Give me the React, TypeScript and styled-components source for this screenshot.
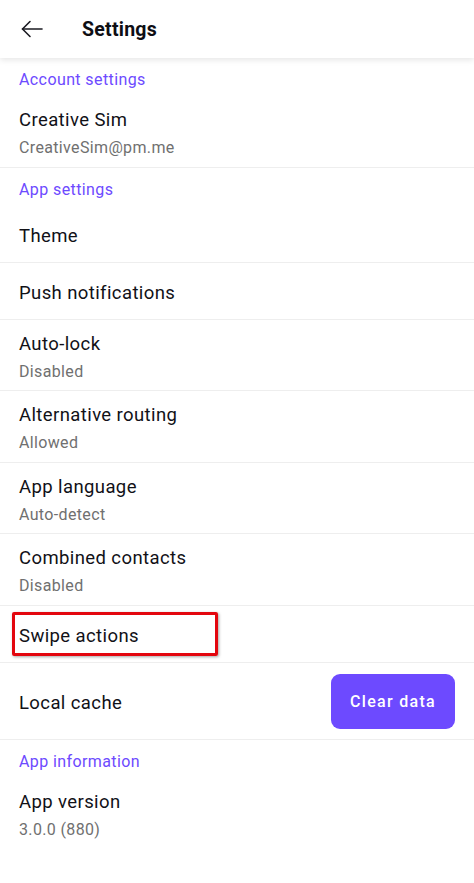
import React from "react";
import styled, { createGlobalStyle } from "styled-components";

const Global = createGlobalStyle`
  html, body { margin: 0; padding: 0; background: #ffffff; }
  body { font-family: Roboto, "Noto Sans", "Liberation Sans", sans-serif; -webkit-font-smoothing: antialiased; }
  * { box-sizing: border-box; }
`;

const Page = styled.div`
  width: 474px;
  min-height: 883px;
  background: #ffffff;
  display: flex;
  flex-direction: column;
`;

const TopBar = styled.header`
  height: 58px;
  display: flex;
  align-items: center;
  padding-left: 19px;
  gap: 39px;
  background: #ffffff;
  box-shadow: 0 2px 6px rgba(0, 0, 0, 0.1);
  position: relative;
  z-index: 1;
`;

const BackButton = styled.button`
  width: 24px;
  height: 24px;
  padding: 0;
  border: none;
  background: none;
  display: flex;
  align-items: center;
  justify-content: center;
  color: #1b1b22;
  overflow: visible;
`;

const Title = styled.h1`
  margin: 0;
  font-size: 19.5px;
  font-weight: 700;
  color: #0e0e14;
  letter-spacing: 0.25px;
`;

const SectionHeader = styled.div`
  padding: 10px 19px 4px;
  font-size: 16px;
  line-height: 24px;
  color: #6d4aff;
  letter-spacing: 0.4px;
`;

const Row = styled.div<{ $twoLine?: boolean; $divider?: boolean }>`
  display: flex;
  flex-direction: column;
  padding: ${(p) => (p.$twoLine ? "12px 19px 6.5px" : "18.5px 19px 13.5px")};
  border-bottom: ${(p) => (p.$divider ? "1px solid #eeeeee" : "none")};
`;

const ActionRow = styled.div`
  display: flex;
  align-items: center;
  justify-content: space-between;
  padding: 11px 19px 10px;
  border-bottom: 1px solid #eeeeee;
`;

const ItemTitle = styled.span`
  font-size: 18.5px;
  line-height: 24px;
  color: #111117;
  letter-spacing: 0.4px;
  position: relative;
`;

const ActionLabel = styled(ItemTitle)`
  margin-top: 3px;
`;

const Highlight = styled.span`
  position: absolute;
  left: -7px;
  top: -12.5px;
  width: 206px;
  height: 44px;
  border: 3px solid #e3060e;
  border-radius: 2px;
  box-shadow: 1px 1px 3px rgba(0, 0, 0, 0.35);
  pointer-events: none;
`;

const ItemSub = styled.span`
  margin-top: 4px;
  font-size: 16px;
  line-height: 24px;
  color: #707070;
  letter-spacing: 0.35px;
`;

const PrimaryButton = styled.button`
  height: 55px;
  width: 124px;
  border: none;
  border-radius: 9px;
  background: #6d4aff;
  color: #ffffff;
  font-family: Roboto, "Noto Sans", sans-serif;
  font-size: 16px;
  font-weight: 500;
  letter-spacing: 1.3px;
`;

type Item = { title: string; sub?: string };

const appItems: Item[] = [
  { title: "Theme" },
  { title: "Push notifications" },
  { title: "Auto-lock", sub: "Disabled" },
  { title: "Alternative routing", sub: "Allowed" },
  { title: "App language", sub: "Auto-detect" },
  { title: "Combined contacts", sub: "Disabled" },
];

const ArrowLeft = () => (
  <svg width="24" height="24" viewBox="0 0 24 24" fill="none" stroke="currentColor" strokeWidth="1.6" strokeLinecap="round" strokeLinejoin="round" style={{ overflow: "visible" }}>
    <path d="M23 12H3.5" />
    <path d="M11 4.5L3.5 12l7.5 7.5" />
  </svg>
);

export default function App() {
  return (
    <Page>
      <Global />
      <TopBar>
        <BackButton aria-label="Back">
          <ArrowLeft />
        </BackButton>
        <Title>Settings</Title>
      </TopBar>

      <SectionHeader>Account settings</SectionHeader>
      <Row $twoLine $divider>
        <ItemTitle>Creative Sim</ItemTitle>
        <ItemSub>CreativeSim@pm.me</ItemSub>
      </Row>

      <SectionHeader>App settings</SectionHeader>
      {appItems.map((it) => (
        <Row key={it.title} $twoLine={!!it.sub} $divider>
          <ItemTitle>{it.title}</ItemTitle>
          {it.sub && <ItemSub>{it.sub}</ItemSub>}
        </Row>
      ))}
      <Row $divider>
        <ItemTitle>
          Swipe actions
          <Highlight />
        </ItemTitle>
      </Row>
      <ActionRow>
        <ActionLabel>Local cache</ActionLabel>
        <PrimaryButton>Clear data</PrimaryButton>
      </ActionRow>

      <SectionHeader>App information</SectionHeader>
      <Row $twoLine>
        <ItemTitle>App version</ItemTitle>
        <ItemSub>3.0.0 (880)</ItemSub>
      </Row>
    </Page>
  );
}
